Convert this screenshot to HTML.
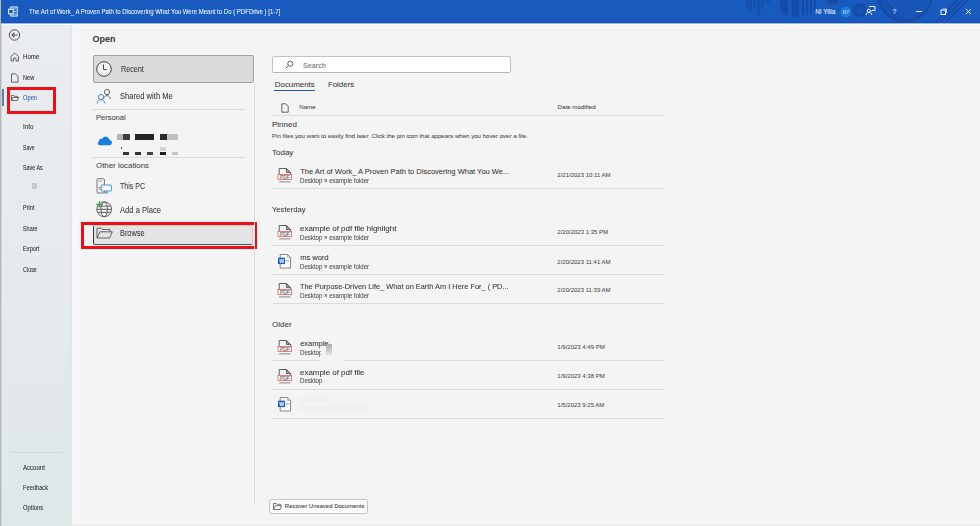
<!DOCTYPE html>
<html><head><meta charset="utf-8">
<style>
*{margin:0;padding:0;box-sizing:border-box}
html,body{width:980px;height:526px;overflow:hidden;background:#f4f4f4;font-family:"Liberation Sans",sans-serif;color:#323130}
.a{position:absolute;white-space:nowrap;line-height:1;-webkit-text-stroke:0.06px currentColor}
svg{position:absolute;overflow:visible}
.hl{position:absolute;height:1px;background:#dcdcdc}
.red{position:absolute;border:3px solid #f00d14}
</style></head><body>
<div class="a" style="left:0;top:0;width:980px;height:23px;background:#185abd;overflow:hidden">
<svg width="980" height="23" style="left:0;top:0">
<defs><clipPath id="cd"><circle cx="905" cy="-6" r="28"/></clipPath></defs>
<g fill="#144ca8">
<rect x="746.5" y="0" width="2.2" height="7.5"/><rect x="750" y="0" width="1.8" height="10"/>
<rect x="753.5" y="0" width="1.8" height="8"/><rect x="757.5" y="0" width="2.2" height="15.5"/>
<rect x="761.5" y="0" width="1.8" height="9"/><rect x="766" y="0" width="3.5" height="3.5" opacity="0.6"/>
<path d="M780 0h7.5v15.5q-3.5 0-7.5-6z"/>
<rect x="792" y="0" width="6.8" height="17.5"/>
<rect x="802" y="0" width="2.2" height="15.5"/><rect x="806" y="0" width="1.8" height="15"/>
<rect x="810" y="0" width="1.8" height="14"/><rect x="814" y="0" width="1.8" height="12"/>
<path d="M827 0a6 4 0 0 0 12 0z"/>
</g>
<circle cx="859.5" cy="10.2" r="5.3" fill="none" stroke="#144ca8" stroke-width="3.6"/>
<circle cx="859.5" cy="10.2" r="3.4" fill="#1753b4"/>
<circle cx="905" cy="-6" r="27" fill="#1856b9" stroke="#144ca8" stroke-width="2.5"/>
<g clip-path="url(#cd)" stroke="#144ca8" stroke-width="1.6">
<line x1="874" y1="0" x2="898" y2="24"/><line x1="879" y1="0" x2="903" y2="24"/><line x1="884" y1="0" x2="908" y2="24"/>
</g>
<g stroke="#144ca8" stroke-width="1.6">
<line x1="934" y1="24" x2="958" y2="0"/><line x1="939" y1="24" x2="963" y2="0"/><line x1="944" y1="24" x2="968" y2="0"/>
</g>
</svg>
<svg width="12" height="12" style="left:7px;top:6px" viewBox="0 0 12 12">
<rect x="3.8" y="1" width="6.4" height="9" fill="none" stroke="#e8eefa" stroke-width="1.1"/>
<line x1="5.5" y1="3" x2="9" y2="3" stroke="#e8eefa" stroke-width="0.8"/>
<line x1="5.5" y1="5.5" x2="9" y2="5.5" stroke="#e8eefa" stroke-width="0.8"/>
<line x1="5.5" y1="8" x2="9" y2="8" stroke="#e8eefa" stroke-width="0.8"/>
<rect x="1.6" y="3.2" width="4.6" height="4.6" fill="#185abd" stroke="#e8eefa" stroke-width="1.1"/>
</svg>
<div class="a" style="left:29.3px;top:8.53px;font-size:6.7px;color:#eef3fb;transform:scaleX(0.9);transform-origin:0 0;">The Art of Work_ A Proven Path to Discovering What You Were Meant to Do ( PDFDrive ) [1-7]</div>
<div class="a" style="left:815.2px;top:8.61px;font-size:6.6px;color:#eef3fb;">Ni Yilia</div>
<svg width="14" height="14" style="left:839px;top:4.5px"><circle cx="6.8" cy="6.9" r="5.4" fill="#1b7bd6"/><text x="7" y="8.9" font-size="4.8" text-anchor="middle" fill="#d8e8f8" font-family="Liberation Sans">NY</text></svg>
<svg width="12" height="12" style="left:865px;top:5px" viewBox="0 0 12 12"><g fill="none" stroke="#eef2fa" stroke-width="1"><path d="M4 1.5h6v4H7l-1.5 1.5"/><circle cx="3.8" cy="5.8" r="1.6"/><path d="M1 10c0.5-2 1.5-2.6 2.8-2.6S6.3 8 6.8 10"/></g></svg>
<div class="a" style="left:892.6px;top:8.37px;font-size:7.0px;color:#eef2fa;">?</div>
<div class="a" style="left:916px;top:11px;width:6px;height:1px;background:#eef2fa"></div>
<svg width="8" height="8" style="left:940px;top:8px"><rect x="1" y="2" width="4.5" height="4.5" fill="none" stroke="#eef2fa" stroke-width="1"/><path d="M2.5 1h4v4" fill="none" stroke="#eef2fa" stroke-width="0.8"/></svg>
<svg width="8" height="8" style="left:965px;top:8px"><path d="M0.9 1.1l5.1 5.1M6 1.1L0.9 6.2" stroke="#eef2fa" stroke-width="1"/></svg>
<div class="a" style="left:0;top:22px;width:980px;height:1px;background:#1452b2"></div>
</div>
<div class="a" style="left:0;top:23px;width:980px;height:1px;background:#9fb6dc"></div>
<div class="a" style="left:0;top:24px;width:980px;height:1px;background:#fdfdfd"></div>
<div class="a" style="left:0;top:25px;width:72px;height:501px;background:linear-gradient(#eaedef,#e6eaed 50%,#dfe7e8)"></div>
<div class="a" style="left:70px;top:25px;width:2px;height:501px;background:#e2e6ea"></div>
<div class="a" style="left:72px;top:25px;width:7px;height:495px;background:#f6f6f7"></div>
<div class="a" style="left:0;top:0;width:1px;height:24px;background:#b9b5a2"></div>
<div class="a" style="left:0;top:24px;width:1px;height:502px;background:#b3b5b6"></div>
<div class="a" style="left:1px;top:24px;width:1px;height:502px;background:#d3d6d8"></div>
<svg width="14" height="14" style="left:8px;top:27.5px" viewBox="0 0 14 14"><g fill="none" stroke="#555" stroke-width="1"><circle cx="6.5" cy="7" r="5.2"/><path d="M9.6 7H4.2M6.4 4.7L4.1 7l2.3 2.3" stroke-width="1.1"/></g></svg>
<svg width="10" height="10" style="left:10px;top:52px" viewBox="0 0 10 10"><path d="M1 9V4.5L4.7 1 8.5 4.5V9H6V6.2H3.5V9z" fill="none" stroke="#555" stroke-width="0.9"/></svg>
<svg width="10" height="10" style="left:10px;top:72.5px" viewBox="0 0 10 10"><path d="M1.5 0.8h4l2.5 2.6v5.8H1.5z" fill="none" stroke="#555" stroke-width="0.9"/></svg>
<svg width="8" height="6" style="left:10.5px;top:95px" viewBox="0 0 8 6"><path d="M0.5 5.5V0.5h2.2l0.8 0.8H6.5v1.2M0.5 5.5h5.8l1.4-3H2L0.5 5.5" fill="none" stroke="#555" stroke-width="0.85"/></svg>
<div class="a" style="left:22.8px;top:54.38px;font-size:6.4px;color:#2b2b2b;transform:scaleX(0.96);transform-origin:0 0;">Home</div>
<div class="a" style="left:22.8px;top:74.88px;font-size:6.4px;color:#2b2b2b;transform:scaleX(0.89);transform-origin:0 0;">New</div>
<div class="a" style="left:22.8px;top:95.38px;font-size:6.4px;color:#2a5ca8;transform:scaleX(0.9);transform-origin:0 0;">Open</div>
<div class="a" style="left:22.8px;top:123.88px;font-size:6.4px;color:#2b2b2b;transform:scaleX(0.97);transform-origin:0 0;">Info</div>
<div class="a" style="left:22.8px;top:144.68px;font-size:6.4px;color:#2b2b2b;transform:scaleX(0.8);transform-origin:0 0;">Save</div>
<div class="a" style="left:22.8px;top:164.98px;font-size:6.4px;color:#2b2b2b;transform:scaleX(0.84);transform-origin:0 0;">Save As</div>
<div class="a" style="left:22.8px;top:205.48px;font-size:6.4px;color:#2b2b2b;transform:scaleX(0.87);transform-origin:0 0;">Print</div>
<div class="a" style="left:22.8px;top:225.98px;font-size:6.4px;color:#2b2b2b;transform:scaleX(0.85);transform-origin:0 0;">Share</div>
<div class="a" style="left:22.8px;top:246.38px;font-size:6.4px;color:#2b2b2b;transform:scaleX(0.89);transform-origin:0 0;">Export</div>
<div class="a" style="left:22.8px;top:266.88px;font-size:6.4px;color:#2b2b2b;transform:scaleX(0.85);transform-origin:0 0;">Close</div>
<div class="a" style="left:22.8px;top:464.88px;font-size:6.4px;color:#2b2b2b;transform:scaleX(0.95);transform-origin:0 0;">Account</div>
<div class="a" style="left:22.8px;top:485.18px;font-size:6.4px;color:#2b2b2b;transform:scaleX(0.89);transform-origin:0 0;">Feedback</div>
<div class="a" style="left:22.8px;top:505.18px;font-size:6.4px;color:#2b2b2b;transform:scaleX(0.92);transform-origin:0 0;">Options</div>
<div class="a" style="left:2px;top:89px;width:2px;height:16.5px;background:#5b7db0"></div>
<div class="a" style="left:31.5px;top:183px;width:5.5px;height:5.5px;background:#c8caca"></div>
<div class="a" style="left:11px;top:451.5px;width:51px;height:1px;background:#d3d9db"></div>
<div class="red" style="left:7px;top:87px;width:48.5px;height:26.5px"></div>
<div class="a" style="left:92.6px;top:35.18px;font-size:9.0px;color:#3a3a3a;font-weight:bold;">Open</div>
<div class="a" style="left:93px;top:55px;width:161px;height:28px;background:#dadada;border:1.3px solid #a0a0a0;border-radius:2px"></div>
<svg width="18" height="18" style="left:95px;top:60px" viewBox="0 0 18 18"><g fill="none" stroke="#444" stroke-width="1"><circle cx="9" cy="9" r="7.3" fill="#f2f2f2"/><path d="M8.5 4.5v5h3.2"/></g></svg>
<div class="a" style="left:121px;top:64.85px;font-size:8.8px;color:#363636;transform:scaleX(0.8182);transform-origin:0 0;">Recent</div>
<svg width="16" height="16" style="left:96px;top:88px" viewBox="0 0 16 16"><g fill="none" stroke-width="1"><circle cx="11" cy="4" r="2.6" stroke="#666"/><path d="M7.5 11c0.5-2.2 1.8-3.4 3.5-3.4s3 1.2 3.5 3.4" stroke="#666"/><circle cx="5" cy="9" r="2.6" stroke="#3a92c4"/><path d="M1 15.5c0.5-2.5 2-3.8 4-3.8s3.5 1.3 4 3.8" stroke="#3a92c4"/></g></svg>
<div class="a" style="left:120px;top:91.95px;font-size:8.8px;color:#363636;transform:scaleX(0.8636);transform-origin:0 0;">Shared with Me</div>
<div class="hl" style="left:93px;top:109px;width:153px"></div>
<div class="a" style="left:96px;top:113.65px;font-size:7.5px;color:#444;">Personal</div>
<svg width="16" height="11" style="left:95.5px;top:134.8px" viewBox="0 0 16 11"><path d="M3.2 10.3h9.8a2.6 2.6 0 0 0 0.6-5.2 3.9 3.9 0 0 0-7.2-1.6 3 3 0 0 0-3.6 3A2.1 2.1 0 0 0 3.2 10.3z" fill="#1a7fd8"/></svg>
<div class="a" style="left:117px;top:134.3px;width:6px;height:6px;background:#b4b4b4;filter:blur(0.35px)"></div>
<div class="a" style="left:123px;top:134.3px;width:6.5px;height:6px;background:#3e3e3e;filter:blur(0.35px)"></div>
<div class="a" style="left:135px;top:134.3px;width:19px;height:6px;background:#262626;filter:blur(0.35px)"></div>
<div class="a" style="left:160px;top:134.3px;width:6.5px;height:6px;background:#2a2a2a;filter:blur(0.35px)"></div>
<div class="a" style="left:166.5px;top:134.3px;width:11.5px;height:6px;background:#c0c0c0;filter:blur(0.35px)"></div>
<div class="a" style="left:123px;top:152px;width:6px;height:3px;background:#3a3a3a;filter:blur(0.3px)"></div>
<div class="a" style="left:135px;top:152px;width:6px;height:3px;background:#333;filter:blur(0.3px)"></div>
<div class="a" style="left:147px;top:152px;width:6px;height:3px;background:#444;filter:blur(0.3px)"></div>
<div class="a" style="left:160px;top:152px;width:6px;height:3px;background:#1e1e1e;filter:blur(0.3px)"></div>
<div class="a" style="left:172px;top:152px;width:6px;height:3px;background:#c4c4c4;filter:blur(0.3px)"></div>
<div class="a" style="left:160px;top:146.5px;width:6px;height:4px;background:#d4d4d4;filter:blur(0.3px)"></div>
<div class="a" style="left:121.3px;top:147px;width:0.8px;height:2px;background:#555"></div>
<div class="hl" style="left:93px;top:157px;width:153px"></div>
<div class="a" style="left:96px;top:161.81px;font-size:7.9px;color:#444;">Other locations</div>
<svg width="20" height="20" style="left:92px;top:175px" viewBox="0 0 20 20"><g fill="none" stroke-width="0.9"><rect x="5" y="3.7" width="7.4" height="14.3" rx="1" stroke="#666"/><path d="M6.5 6h3.5M6.5 12.5h2.5M6.5 14.2h2.5" stroke="#777" stroke-width="0.7"/><rect x="9.2" y="10" width="10.2" height="6" rx="0.6" fill="#f4f4f4" stroke="#3a8ac8"/><path d="M14.3 16v1.8M12.2 18h4.2" stroke="#3a8ac8"/></g></svg>
<div class="a" style="left:120.1px;top:182.05px;font-size:8.8px;color:#363636;transform:scaleX(0.8);transform-origin:0 0;">This PC</div>
<svg width="20" height="20" style="left:92px;top:199px" viewBox="0 0 20 20"><g fill="none" stroke="#555" stroke-width="0.9"><circle cx="12.2" cy="10.3" r="7.4"/><ellipse cx="12.2" cy="10.3" rx="3.2" ry="7.4"/><path d="M4.8 10.3h14.8M5.6 7.2h13.2M5.6 13.4h13.2"/></g><path d="M7.5 2v6.6M4.2 5.3h6.6" stroke="#2aa84a" stroke-width="1.2"/></svg>
<div class="a" style="left:120.1px;top:205.75px;font-size:8.8px;color:#363636;transform:scaleX(0.8636);transform-origin:0 0;">Add a Place</div>
<div class="a" style="left:93px;top:224.5px;width:160px;height:20px;background:#e4e4e4;border:1px solid #c4c4c4;border-left:1.5px solid #333;border-bottom:1.5px solid #555;border-radius:2px"></div>
<svg width="17" height="12" style="left:95.5px;top:227px" viewBox="0 0 17 12"><path d="M1 11V1.2h4.5l1.2 1.3H14v2.3M1 11h12.5l2.8-6.2H4L1 11" fill="none" stroke="#555" stroke-width="0.9"/></svg>
<div class="a" style="left:120.1px;top:229.35px;font-size:8.8px;color:#363636;transform:scaleX(0.8364);transform-origin:0 0;">Browse</div>
<div class="red" style="left:80.5px;top:222px;width:176px;height:26.5px"></div>
<div class="a" style="left:253.5px;top:83px;width:1.2px;height:421px;background:#dedede"></div>
<div class="a" style="left:272px;top:56px;width:239px;height:17px;background:#fff;border:1px solid #c4c4c4;border-bottom-color:#b4b4b4;border-radius:2.5px"></div>
<svg width="9" height="9" style="left:284.5px;top:60px" viewBox="0 0 9 9"><circle cx="5.3" cy="3.7" r="2.6" fill="none" stroke="#555" stroke-width="0.9"/><path d="M3.5 5.6L0.8 8.3" stroke="#555" stroke-width="1"/></svg>
<div class="a" style="left:303px;top:61.81px;font-size:7.2px;color:#6e6e6e;">Search</div>
<div class="a" style="left:274.8px;top:80.51px;font-size:7.9px;color:#3a3a3a;">Documents</div>
<div class="a" style="left:274px;top:89.6px;width:40.5px;height:1.3px;background:#2a5ab0"></div>
<div class="a" style="left:327.9px;top:80.51px;font-size:7.9px;color:#3a3a3a;">Folders</div>
<svg width="8" height="10" style="left:280.5px;top:102.5px" viewBox="0 0 8 10"><path d="M0.8 0.8h4l2.4 2.4v6H0.8z" fill="none" stroke="#555" stroke-width="0.9"/></svg>
<div class="a" style="left:299.2px;top:104.15px;font-size:6.2px;color:#444;">Name</div>
<div class="a" style="left:557.5px;top:104.15px;font-size:6.2px;color:#444;">Date modified</div>
<div class="hl" style="left:272px;top:115px;width:392px"></div>
<div class="a" style="left:272px;top:120.53px;font-size:8.0px;color:#3a3a3a;">Pinned</div>
<div class="a" style="left:272px;top:132.64px;font-size:6.1px;color:#4a4a4a;">Pin files you want to easily find later. Click the pin icon that appears when you hover over a file.</div>
<div class="a" style="left:272px;top:149.33px;font-size:8.0px;color:#3a3a3a;">Today</div>
<div class="a" style="left:272px;top:205.73px;font-size:8.0px;color:#3a3a3a;transform:scaleX(0.95);transform-origin:0 0;">Yesterday</div>
<div class="a" style="left:272px;top:321.03px;font-size:8.0px;color:#3a3a3a;">Older</div>
<div class="a" style="left:300.2px;top:168.15px;font-size:7.5px;color:#363636;">The Art of Work_ A Proven Path to Discovering What You We...</div>
<div class="a" style="left:300.2px;top:177.52px;font-size:6.71px;color:#4a4a4a;transform:scaleX(0.9091);transform-origin:0 0;">Desktop » example folder</div>
<div class="a" style="left:557.3px;top:172.22px;font-size:6.0px;color:#4a4a4a;">2/21/2023 10:11 AM</div>
<div class="hl" style="left:273px;top:187.7px;width:391px"></div>
<svg width="16" height="16" style="left:277px;top:168.2px" viewBox="0 0 16 16"><path d="M2.2 6.5V0.5H9.4L13.6 4.6V6.5" fill="none" stroke="#505050" stroke-width="0.9"/><path d="M9.4 0.5V4.6H13.6z" fill="#9a9a9a" stroke="#505050" stroke-width="0.8"/><path d="M2.2 13.9H13.6" stroke="#8a8a8a" stroke-width="1"/><rect x="1" y="6.5" width="13.6" height="5" fill="#f6f6f6" stroke="#d86a6a" stroke-width="0.85"/><text x="3" y="11.1" font-size="5" textLength="9.8" lengthAdjust="spacingAndGlyphs" fill="#4a4a4a" font-family="Liberation Sans">PDF</text></svg>
<div class="a" style="left:300.2px;top:225.35px;font-size:7.5px;color:#363636;transform:scaleX(1.06);transform-origin:0 0;">example of pdf file highlight</div>
<div class="a" style="left:300.2px;top:234.72px;font-size:6.71px;color:#4a4a4a;transform:scaleX(0.9091);transform-origin:0 0;">Desktop » example folder</div>
<div class="a" style="left:557.3px;top:229.42px;font-size:6.0px;color:#4a4a4a;">2/20/2023 1:35 PM</div>
<div class="hl" style="left:273px;top:244.9px;width:391px"></div>
<svg width="16" height="16" style="left:277px;top:225.4px" viewBox="0 0 16 16"><path d="M2.2 6.5V0.5H9.4L13.6 4.6V6.5" fill="none" stroke="#505050" stroke-width="0.9"/><path d="M9.4 0.5V4.6H13.6z" fill="#9a9a9a" stroke="#505050" stroke-width="0.8"/><path d="M2.2 13.9H13.6" stroke="#8a8a8a" stroke-width="1"/><rect x="1" y="6.5" width="13.6" height="5" fill="#f6f6f6" stroke="#d86a6a" stroke-width="0.85"/><text x="3" y="11.1" font-size="5" textLength="9.8" lengthAdjust="spacingAndGlyphs" fill="#4a4a4a" font-family="Liberation Sans">PDF</text></svg>
<div class="a" style="left:300.2px;top:254.45px;font-size:7.5px;color:#363636;">ms word</div>
<div class="a" style="left:300.2px;top:263.82px;font-size:6.71px;color:#4a4a4a;transform:scaleX(0.9091);transform-origin:0 0;">Desktop » example folder</div>
<div class="a" style="left:557.3px;top:258.52px;font-size:6.0px;color:#4a4a4a;">2/20/2023 11:41 AM</div>
<div class="hl" style="left:273px;top:274.0px;width:391px"></div>
<svg width="16" height="16" style="left:277px;top:253.5px" viewBox="0 0 16 16"><path d="M3.2 0.5H10.6L13.6 3.5V14H3.2z" fill="#fafafa" stroke="#6a6a6a" stroke-width="0.8"/><path d="M10.6 0.5V3.5H13.6" fill="none" stroke="#8a8a8a" stroke-width="0.6"/><path d="M8.5 6.8h3.5" stroke="#5aa0e0" stroke-width="0.9"/><rect x="1" y="3.7" width="7" height="6.4" fill="#1b5fc0"/><text x="4.5" y="8.8" font-size="5" text-anchor="middle" fill="#fff" font-weight="bold" font-family="Liberation Sans">W</text></svg>
<div class="a" style="left:300.2px;top:283.35px;font-size:7.5px;color:#363636;transform:scaleX(0.985);transform-origin:0 0;">The Purpose-Driven Life_ What on Earth Am I Here For_ ( PD...</div>
<div class="a" style="left:300.2px;top:292.72px;font-size:6.71px;color:#4a4a4a;transform:scaleX(0.9091);transform-origin:0 0;">Desktop » example folder</div>
<div class="a" style="left:557.3px;top:287.42px;font-size:6.0px;color:#4a4a4a;">2/20/2023 11:39 AM</div>
<div class="hl" style="left:273px;top:302.9px;width:391px"></div>
<svg width="16" height="16" style="left:277px;top:283.4px" viewBox="0 0 16 16"><path d="M2.2 6.5V0.5H9.4L13.6 4.6V6.5" fill="none" stroke="#505050" stroke-width="0.9"/><path d="M9.4 0.5V4.6H13.6z" fill="#9a9a9a" stroke="#505050" stroke-width="0.8"/><path d="M2.2 13.9H13.6" stroke="#8a8a8a" stroke-width="1"/><rect x="1" y="6.5" width="13.6" height="5" fill="#f6f6f6" stroke="#d86a6a" stroke-width="0.85"/><text x="3" y="11.1" font-size="5" textLength="9.8" lengthAdjust="spacingAndGlyphs" fill="#4a4a4a" font-family="Liberation Sans">PDF</text></svg>
<div class="a" style="left:300.2px;top:340.15px;font-size:7.5px;color:#363636;">example</div>
<div class="a" style="left:300.2px;top:349.52px;font-size:6.71px;color:#4a4a4a;transform:scaleX(0.9091);transform-origin:0 0;">Desktop</div>
<div class="a" style="left:557.3px;top:344.22px;font-size:6.0px;color:#4a4a4a;">1/9/2023 4:49 PM</div>
<div class="hl" style="left:273px;top:359.7px;width:391px"></div>
<svg width="16" height="16" style="left:277px;top:340.2px" viewBox="0 0 16 16"><path d="M2.2 6.5V0.5H9.4L13.6 4.6V6.5" fill="none" stroke="#505050" stroke-width="0.9"/><path d="M9.4 0.5V4.6H13.6z" fill="#9a9a9a" stroke="#505050" stroke-width="0.8"/><path d="M2.2 13.9H13.6" stroke="#8a8a8a" stroke-width="1"/><rect x="1" y="6.5" width="13.6" height="5" fill="#f6f6f6" stroke="#d86a6a" stroke-width="0.85"/><text x="3" y="11.1" font-size="5" textLength="9.8" lengthAdjust="spacingAndGlyphs" fill="#4a4a4a" font-family="Liberation Sans">PDF</text></svg>
<div class="a" style="left:300.2px;top:368.95px;font-size:7.5px;color:#363636;transform:scaleX(1.06);transform-origin:0 0;">example of pdf file</div>
<div class="a" style="left:300.2px;top:378.32px;font-size:6.71px;color:#4a4a4a;transform:scaleX(0.9091);transform-origin:0 0;">Desktop</div>
<div class="a" style="left:557.3px;top:373.02px;font-size:6.0px;color:#4a4a4a;">1/9/2023 4:38 PM</div>
<div class="hl" style="left:273px;top:388.5px;width:391px"></div>
<svg width="16" height="16" style="left:277px;top:369.0px" viewBox="0 0 16 16"><path d="M2.2 6.5V0.5H9.4L13.6 4.6V6.5" fill="none" stroke="#505050" stroke-width="0.9"/><path d="M9.4 0.5V4.6H13.6z" fill="#9a9a9a" stroke="#505050" stroke-width="0.8"/><path d="M2.2 13.9H13.6" stroke="#8a8a8a" stroke-width="1"/><rect x="1" y="6.5" width="13.6" height="5" fill="#f6f6f6" stroke="#d86a6a" stroke-width="0.85"/><text x="3" y="11.1" font-size="5" textLength="9.8" lengthAdjust="spacingAndGlyphs" fill="#4a4a4a" font-family="Liberation Sans">PDF</text></svg>
<div class="a" style="left:557.3px;top:402.32px;font-size:6.0px;color:#4a4a4a;">1/5/2023 9:25 AM</div>
<div class="hl" style="left:273px;top:417.8px;width:391px"></div>
<svg width="16" height="16" style="left:277px;top:397.3px" viewBox="0 0 16 16"><path d="M3.2 0.5H10.6L13.6 3.5V14H3.2z" fill="#fafafa" stroke="#6a6a6a" stroke-width="0.8"/><path d="M10.6 0.5V3.5H13.6" fill="none" stroke="#8a8a8a" stroke-width="0.6"/><path d="M8.5 6.8h3.5" stroke="#5aa0e0" stroke-width="0.9"/><rect x="1" y="3.7" width="7" height="6.4" fill="#1b5fc0"/><text x="4.5" y="8.8" font-size="5" text-anchor="middle" fill="#fff" font-weight="bold" font-family="Liberation Sans">W</text></svg>
<div class="a" style="left:320.5px;top:347.5px;width:24px;height:14px;background:#f4f4f4;filter:blur(0.6px)"></div>
<div class="a" style="left:325.5px;top:343.6px;width:6px;height:11px;background:linear-gradient(#aaaaaa,#c8c8c8 55%,#e4e4e4);filter:blur(0.5px)"></div>
<div class="a" style="left:300px;top:397px;width:30px;height:5px;background:#f0f0f0;filter:blur(1px)"></div>
<div class="a" style="left:300px;top:406px;width:68px;height:5px;background:#f0f0f0;filter:blur(1px)"></div>
<div class="a" style="left:269px;top:499px;width:99px;height:14.5px;background:#fafafa;border:1px solid #c6c6c6;border-radius:2px"></div>
<svg width="9" height="7" style="left:273px;top:502.5px" viewBox="0 0 9 7"><path d="M0.5 6.5V0.5h2.6l0.8 0.8H7.5v1.3M0.5 6.5h6.5l1.6-3.8H2.2L0.5 6.5" fill="none" stroke="#555" stroke-width="0.8"/></svg>
<div class="a" style="left:284.8px;top:503.42px;font-size:6.0px;color:#3a3a3a;">Recover Unsaved Documents</div>
<div class="a" style="left:72px;top:520px;width:908px;height:4px;background:#f6f6f5"></div>
<div class="a" style="left:72px;top:524px;width:908px;height:2px;background:#eceded"></div>
</body></html>
